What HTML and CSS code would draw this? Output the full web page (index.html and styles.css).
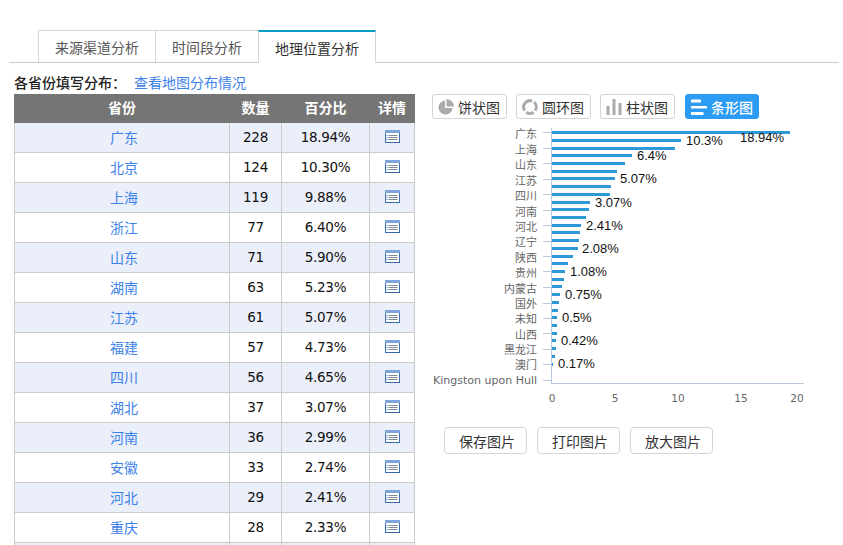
FILE: index.html
```html
<!DOCTYPE html>
<html lang="zh-CN">
<head>
<meta charset="utf-8">
<title>地理位置分析</title>
<link rel="stylesheet" href="styles.css">
</head>
<body>
<svg class="defs" width="0" height="0" aria-hidden="true">
  <symbol id="doc" viewBox="0 0 15 13">
    <rect x="0.5" y="0.5" width="14" height="12" fill="#fff" stroke="#3f6fb5"/>
    <rect x="0" y="0" width="15" height="3" fill="#7fa3dc"/>
    <rect x="0" y="12" width="15" height="1" fill="#3466ad"/>
    <path d="M3.5 5.500h9M3.500 7.500h9M3.500 9.500h9" stroke="#7c8798" stroke-width="1"/>
    <path d="M1.500 5.500h1M1.500 7.500h1M1.500 9.500h1" stroke="#4f7cc0" stroke-width="1"/>
  </symbol>
</svg>
<nav class="tabs">
  <a class="tab tab-a">来源渠道分析</a>
  <a class="tab tab-b">时间段分析</a>
  <a class="tab tab-c active">地理位置分析</a>
</nav>
<main class="content">
  <section class="left">
    <div class="heading"><strong>各省份填写分布：</strong><a class="link">查看地图分布情况</a></div>
    <table class="data">
      <thead><tr><th class="c1">省份</th><th class="c2">数量</th><th class="c3">百分比</th><th class="c4">详情</th></tr></thead>
      <tbody>
        <tr><td><a>广东</a></td><td>228</td><td>18.94%</td><td><svg class="doc"><use href="#doc"/></svg></td></tr>
        <tr><td><a>北京</a></td><td>124</td><td>10.30%</td><td><svg class="doc"><use href="#doc"/></svg></td></tr>
        <tr><td><a>上海</a></td><td>119</td><td>9.88%</td><td><svg class="doc"><use href="#doc"/></svg></td></tr>
        <tr><td><a>浙江</a></td><td>77</td><td>6.40%</td><td><svg class="doc"><use href="#doc"/></svg></td></tr>
        <tr><td><a>山东</a></td><td>71</td><td>5.90%</td><td><svg class="doc"><use href="#doc"/></svg></td></tr>
        <tr><td><a>湖南</a></td><td>63</td><td>5.23%</td><td><svg class="doc"><use href="#doc"/></svg></td></tr>
        <tr><td><a>江苏</a></td><td>61</td><td>5.07%</td><td><svg class="doc"><use href="#doc"/></svg></td></tr>
        <tr><td><a>福建</a></td><td>57</td><td>4.73%</td><td><svg class="doc"><use href="#doc"/></svg></td></tr>
        <tr><td><a>四川</a></td><td>56</td><td>4.65%</td><td><svg class="doc"><use href="#doc"/></svg></td></tr>
        <tr><td><a>湖北</a></td><td>37</td><td>3.07%</td><td><svg class="doc"><use href="#doc"/></svg></td></tr>
        <tr><td><a>河南</a></td><td>36</td><td>2.99%</td><td><svg class="doc"><use href="#doc"/></svg></td></tr>
        <tr><td><a>安徽</a></td><td>33</td><td>2.74%</td><td><svg class="doc"><use href="#doc"/></svg></td></tr>
        <tr><td><a>河北</a></td><td>29</td><td>2.41%</td><td><svg class="doc"><use href="#doc"/></svg></td></tr>
        <tr><td><a>重庆</a></td><td>28</td><td>2.33%</td><td><svg class="doc"><use href="#doc"/></svg></td></tr>
        <tr class="cut"><td></td><td></td><td></td><td></td></tr>
      </tbody>
    </table>
  </section>
  <section class="right">
    <div class="toolbar">
      <button class="type">
        <svg class="type-icon" viewBox="0 0 16 16"><path class="ico" d="M7 1.500a7 7 0 1 0 7.500 7.500H7z"/><path class="ico" d="M8.500 0v7.500H16A8 8 0 0 0 8.500 0z"/></svg>饼状图
      </button>
      <button class="type">
        <svg class="type-icon" viewBox="0 0 16 16"><path class="ico-ring" d="M12.050 3.170A6.300 6.300 0 0 1 13.160 11.610M11.610 13.160A6.300 6.300 0 0 1 4.390 13.160M2.840 11.610A6.300 6.300 0 0 1 10.150 2.080"/></svg>圆环图
      </button>
      <button class="type">
        <svg class="type-icon" viewBox="0 0 16 16"><rect class="ico" x="0.500" y="7" width="3" height="9"/><rect class="ico" x="6.500" y="0" width="3" height="16"/><rect class="ico" x="12.500" y="4" width="3" height="12"/></svg>柱状图
      </button>
      <button class="type selected">
        <svg class="type-icon" viewBox="0 0 16 16"><rect class="ico-w" x="0" y="0.500" width="10" height="3"/><rect class="ico-w" x="0" y="7" width="16" height="2.500"/><rect class="ico-w" x="0" y="13" width="12.500" height="3"/></svg>条形图
      </button>
    </div>
    <svg class="chart" viewBox="430 122 400 290" width="400" height="290" shape-rendering="crispEdges">
      <g class="axis">
        <path d="M551.5 128V383.5H804"/>
        <path d="M543 132.500H551M543 148.500H551M543 163.500H551M543 179.500H551M543 194.500H551M543 210.500H551M543 225.500H551M543 241.500H551M543 256.500H551M543 271.500H551M543 287.500H551M543 303.500H551M543 318.500H551M543 333.500H551M543 349.500H551M543 364.500H551M543 380.500H551"/>
      </g>
      <g class="bars">
        <rect x="552" y="131" width="238" height="3"/>
        <rect x="552" y="139" width="129" height="3"/>
        <rect x="552" y="147" width="123" height="3"/>
        <rect x="552" y="154" width="80" height="3"/>
        <rect x="552" y="162" width="73" height="3"/>
        <rect x="552" y="170" width="65" height="3"/>
        <rect x="552" y="177" width="63" height="3"/>
        <rect x="552" y="185" width="59" height="3"/>
        <rect x="552" y="193" width="58" height="3"/>
        <rect x="552" y="201" width="38" height="3"/>
        <rect x="552" y="208" width="37" height="3"/>
        <rect x="552" y="216" width="34" height="3"/>
        <rect x="552" y="224" width="29" height="3"/>
        <rect x="552" y="231" width="28" height="3"/>
        <rect x="552" y="239" width="27" height="3"/>
        <rect x="552" y="247" width="26" height="3"/>
        <rect x="552" y="255" width="21" height="3"/>
        <rect x="552" y="262" width="16" height="3"/>
        <rect x="552" y="270" width="13" height="3"/>
        <rect x="552" y="278" width="12" height="3"/>
        <rect x="552" y="285" width="10" height="3"/>
        <rect x="552" y="293" width="8" height="3"/>
        <rect x="552" y="301" width="7" height="3"/>
        <rect x="552" y="309" width="6" height="3"/>
        <rect x="552" y="316" width="5" height="3"/>
        <rect x="552" y="324" width="5" height="3"/>
        <rect x="552" y="332" width="5" height="3"/>
        <rect x="552" y="339" width="4" height="3"/>
        <rect x="552" y="347" width="4" height="3"/>
        <rect x="552" y="355" width="3" height="3"/>
        <rect x="552" y="363" width="1" height="3"/>
      </g>
      <g class="cats">
        <text x="537" y="138">广东</text>
        <text x="537" y="153.500">上海</text>
        <text x="537" y="169">山东</text>
        <text x="537" y="184.500">江苏</text>
        <text x="537" y="200">四川</text>
        <text x="537" y="215.500">河南</text>
        <text x="537" y="231">河北</text>
        <text x="537" y="246">辽宁</text>
        <text x="537" y="262">陕西</text>
        <text x="537" y="277">贵州</text>
        <text x="537" y="292.500">内蒙古</text>
        <text x="537" y="308">国外</text>
        <text x="537" y="323">未知</text>
        <text x="537" y="338.500">山西</text>
        <text x="537" y="354">黑龙江</text>
        <text x="537" y="369">澳门</text>
        <text x="537" y="384">Kingston upon Hull</text>
      </g>
      <g class="vals">
        <text x="740" y="142">18.94%</text>
        <text x="686" y="145">10.3%</text>
        <text x="637" y="160">6.4%</text>
        <text x="620" y="183">5.07%</text>
        <text x="595" y="207">3.07%</text>
        <text x="586" y="230">2.41%</text>
        <text x="582" y="253">2.08%</text>
        <text x="570" y="276">1.08%</text>
        <text x="565" y="299">0.75%</text>
        <text x="562" y="322">0.5%</text>
        <text x="561" y="345">0.42%</text>
        <text x="558" y="368">0.17%</text>
      </g>
      <g class="ticks">
        <text x="552" y="402">0</text>
        <text x="615" y="402">5</text>
        <text x="678" y="402">10</text>
        <text x="741" y="402">15</text>
        <text x="797" y="402">20</text>
      </g>
    </svg>
    <div class="actions">
      <button class="act">保存图片</button>
      <button class="act">打印图片</button>
      <button class="act">放大图片</button>
    </div>
  </section>
</main>
</body>
</html>
```
FILE: styles.css
```css
html, body {
  margin: 0;
  height: 545px;
  overflow: hidden;
  background: #fff;
}
body {
  font-family: "Noto Sans CJK SC", "Liberation Sans", sans-serif;
  color: #222;
  font-size: 14px;
}
.defs { display: block; height: 0; }

.tabs {
  display: flex;
  margin: 30px 4px 0 9px;
  padding-left: 29px;
  height: 32px;
  border-bottom: 1px solid #ccc;
}
.tab {
  box-sizing: border-box;
  height: 32px;
  border: 1px solid #d6d6d6;
  border-bottom: 0;
  border-right: 0;
  text-align: center;
  line-height: 32px;
  color: #555;
  background: #fff;
}
.tab-a { width: 117px; }
.tab-b { width: 103px; }
.tab-c {
  width: 118px;
  height: 33px;
  border-right: 1px solid #d6d6d6;
  border-top: 2px solid #0a9fc2;
  line-height: 33px;
  color: #333;
}

.content {
  display: flex;
  padding-left: 14px;
  height: 482px;
  overflow: hidden;
}
.left { width: 401px; }
.heading {
  height: 31px;
  line-height: 38px;
  font-size: 14px;
  color: #222;
  white-space: nowrap;
}
.heading strong {
  font-weight: 500;
  display: inline-block;
  width: 120px;
}
.link, td a { color: #3d82e8; }

.data {
  border-collapse: collapse;
  table-layout: fixed;
  width: 400px;
}
.data th {
  background: #757575;
  color: #fff;
  height: 24px;
  padding: 0 0 3px;
  font-weight: 700;
  font-size: 14px;
  border: 1px solid #757575;
}
.c1 { width: 214px; }
.c2 { width: 51px; }
.c3 { width: 87px; }
.c4 { width: 44px; }
.data td {
  height: 27px;
  padding: 0 0 2px;
  border: 1px solid #ccc;
  text-align: center;
  font-family: "DejaVu Sans", "Noto Sans CJK SC", sans-serif;
  font-size: 13.5px;
  letter-spacing: -0.3px;
  color: #111;
}
.data td:first-child { padding-left: 4px; }
.data td a {
  font-family: "Noto Sans CJK SC", sans-serif;
  font-size: 14px;
  letter-spacing: 0;
}
.data tbody tr:nth-child(odd) td { background: #ebeffa; }
.data .cut td {
  height: 2px;
  padding: 0;
  background: #fff;
  border-bottom: 0;
}
.doc {
  display: block;
  width: 15px;
  height: 13px;
  margin: 0 auto 1px;
}

.right {
  margin-left: 17px;
  width: 410px;
  padding-top: 31px;
}
.toolbar {
  display: flex;
  gap: 9px;
  height: 25px;
}
.type {
  box-sizing: border-box;
  display: flex;
  align-items: center;
  gap: 4px;
  width: 75px;
  height: 25px;
  padding: 0 0 0 5px;
  margin: 0;
  background: #fff;
  border: 1px solid #d4d4d4;
  border-radius: 3px;
  font: 14px "Noto Sans CJK SC", sans-serif;
  color: #333;
}
.selected {
  width: 74px;
  margin-left: 1px;
  background: #2b9bf4;
  border-color: #2b9bf4;
  color: #fff;
  font-weight: 500;
}
.type-icon { width: 16px; height: 16px; flex: none; }
.ico { fill: #aaa; }
.ico-ring { fill: none; stroke: #aaa; stroke-width: 3; }
.ico-w { fill: #fff; }

.chart {
  display: block;
  margin-left: -2px;
  margin-top: 3px;
}
.axis path { fill: none; stroke: #b9c7dc; stroke-width: 1; }
.bars rect { fill: #2f98d8; }
.cats text {
  text-anchor: end;
  font: 11px "DejaVu Sans", "Noto Sans CJK SC", sans-serif;
  fill: #666;
}
.vals text {
  font: 13px "Liberation Sans", sans-serif;
  fill: #111;
}
.ticks text {
  text-anchor: middle;
  font: 10.5px "DejaVu Sans", sans-serif;
  fill: #666;
}

.actions {
  display: flex;
  gap: 10px;
  margin: 15px 0 0 12px;
}
.act {
  box-sizing: border-box;
  width: 83px;
  height: 27px;
  padding: 0 0 0 3px;
  background: #fff;
  border: 1px solid #d4d4d4;
  border-radius: 4px;
  font: 14px "Noto Sans CJK SC", sans-serif;
  color: #333;
}
```
